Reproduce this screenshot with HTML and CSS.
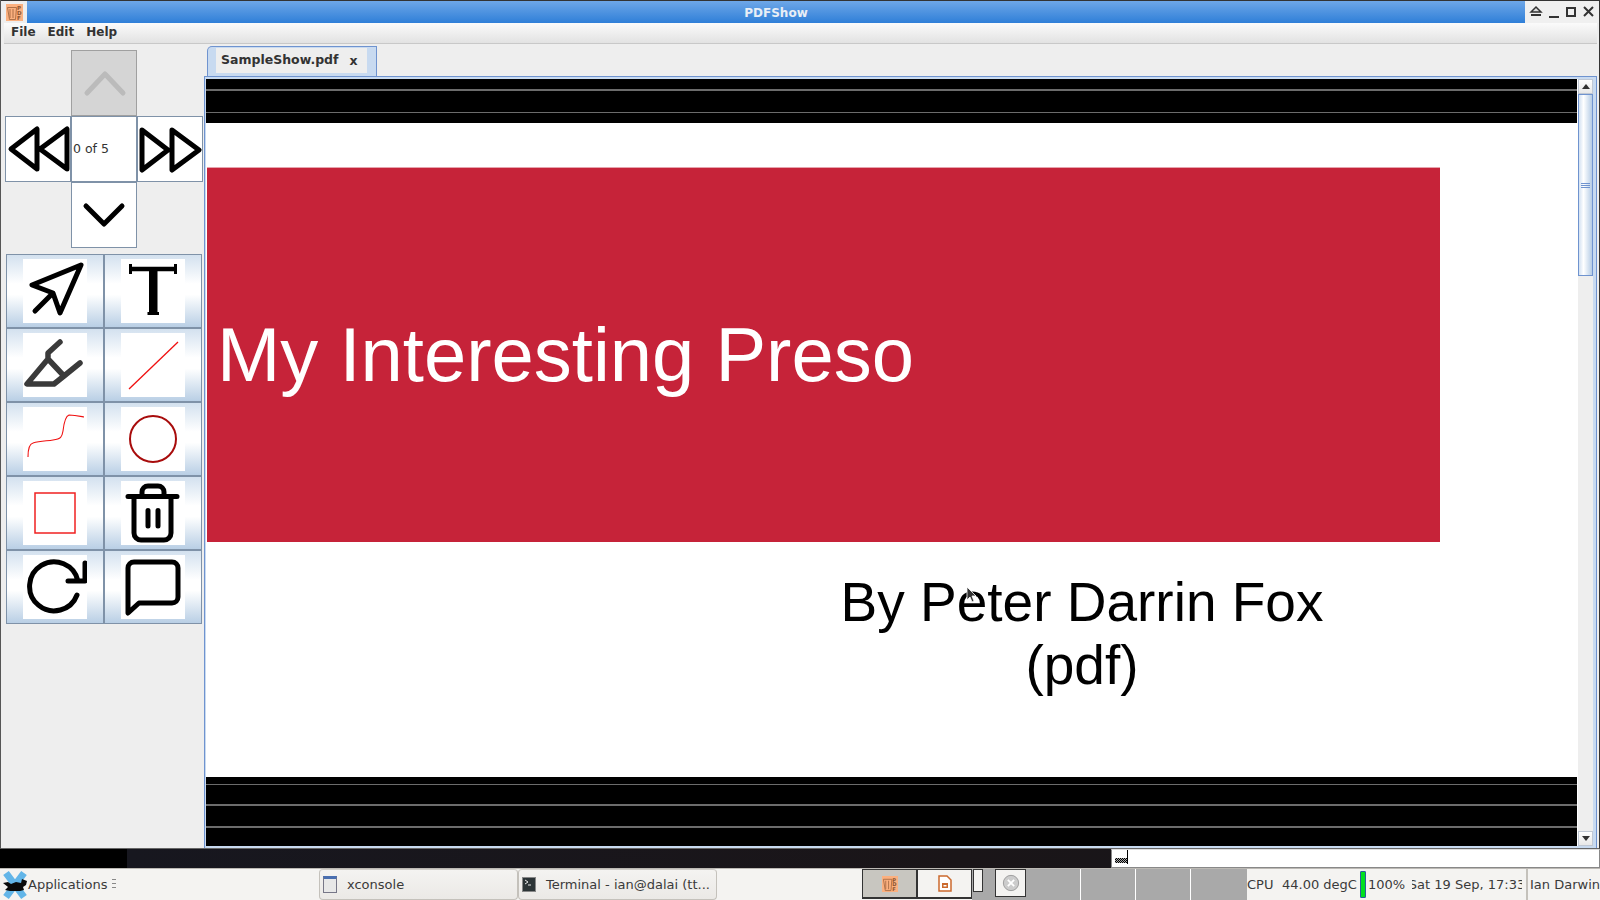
FILE: index.html
```html
<!DOCTYPE html>
<html lang="en">
<head>
<meta charset="utf-8">
<title>PDFShow</title>
<link rel="stylesheet" href="styles.css">
</head>
<body>
<div class="window">
  <header class="titlebar">
    <div class="app-icon">
      <svg width="17" height="17" viewBox="0 0 17 17"><rect width="17" height="17" fill="#fbb07f"/><path d="M1.500 3.500H10.500L9.500 15.500H3.500ZM4 5V14M7 5V14" fill="none" stroke="#a56a42" stroke-width=".9"/><text x="11" y="6" class="mini-pdf">P</text><text x="11" y="11" class="mini-pdf">D</text><text x="11" y="16" class="mini-pdf">F</text></svg>
    </div>
    <div class="title">PDFShow</div>
    <div class="wm-buttons">
      <svg width="16" height="16" viewBox="0 0 16 16"><path d="M3 8l5-5 5 5z" fill="#ddd" stroke="#333" stroke-width="1.500"/><path d="M3 11h10" stroke="#333" stroke-width="2"/></svg>
      <svg width="14" height="16" viewBox="0 0 14 16"><path d="M2 13h10" stroke="#333" stroke-width="2"/></svg>
      <svg width="14" height="16" viewBox="0 0 14 16"><rect x="3" y="4" width="8" height="8" fill="none" stroke="#333" stroke-width="2"/></svg>
      <svg width="14" height="16" viewBox="0 0 14 16"><path d="M3 3l9 9M12 3l-9 9" stroke="#333" stroke-width="2"/></svg>
    </div>
  </header>

  <nav class="menubar">
    <span class="menu-item">File</span>
    <span class="menu-item">Edit</span>
    <span class="menu-item">Help</span>
  </nav>

  <main class="main">
    <aside class="sidebar">
      <div class="nav-pad">
        <button class="nav-btn nav-up">
          <svg width="64" height="64" viewBox="0 0 64 64"><path d="M15 42L33 23L51 42" class="stroke-grey"/></svg>
        </button>
        <button class="nav-btn nav-prev">
          <svg width="64" height="64" viewBox="0 0 64 64"><path d="M5 32L31 12V52ZM34 32L61 12V52Z" class="stroke-black"/></svg>
        </button>
        <div class="nav-btn nav-count">0 of 5</div>
        <button class="nav-btn nav-next">
          <svg width="64" height="64" viewBox="0 0 64 64"><path d="M4 13L30 33L4 53ZM34 13L61 33L34 53Z" class="stroke-black"/></svg>
        </button>
        <button class="nav-btn nav-down">
          <svg width="64" height="64" viewBox="0 0 64 64"><path d="M14 23L32 41L50 23" class="stroke-black"/></svg>
        </button>
      </div>

      <div class="tools">
        <div class="tool"><svg class="tool-icon" viewBox="0 0 64 64"><path d="M58 6L9 26L30 34L37 54ZM28 36L12 52" class="stroke-icon"/></svg></div>
        <div class="tool"><svg class="tool-icon" viewBox="0 0 64 64"><path d="M9.500 5V15M54.500 5V15" fill="none" stroke="#000" stroke-width="3"/><path d="M9 10H55" fill="none" stroke="#000" stroke-width="4.500"/><rect x="28" y="9" width="8.500" height="46" rx="1"/><rect x="26.500" y="53" width="11.500" height="3"/></svg></div>
        <div class="tool"><svg class="tool-icon" viewBox="0 0 64 64"><path d="M37 9L25 20V26L4 51H31L41 43L57 30M25 26L41 43" fill="none" stroke="#3a3a3a" stroke-width="5.500" stroke-linecap="round" stroke-linejoin="round"/></svg></div>
        <div class="tool"><svg class="tool-icon" viewBox="0 0 64 64"><path d="M8 56L57 9" stroke="#f01010" stroke-width="1.300"/></svg></div>
        <div class="tool"><svg class="tool-icon" viewBox="0 0 64 64"><path d="M5 50C5 42 6 37 10 36C17 34 24 34 30 33C38 32 39 30 40 24C41 15 43 9 46 8C52 8 56 9 61 10" fill="none" stroke="#f01010" stroke-width="1.100"/></svg></div>
        <div class="tool"><svg class="tool-icon" viewBox="0 0 64 64"><circle cx="32" cy="32" r="23" fill="none" stroke="#a80c0c" stroke-width="2"/></svg></div>
        <div class="tool"><svg class="tool-icon" viewBox="0 0 64 64"><rect x="12" y="12" width="40" height="40" fill="none" stroke="#f02020" stroke-width="1.500"/></svg></div>
        <div class="tool"><svg class="tool-icon" viewBox="0 0 64 64"><path d="M7 15.500H56M21 15.500V11A6 6 0 0 1 27 5H37A6 6 0 0 1 43 11V15.500M13 17V52A7 7 0 0 0 20 59H43A7 7 0 0 0 50 52V17M27 29.500V45M37 29.500V45" class="stroke-icon"/></svg></div>
        <div class="tool"><svg class="tool-icon" viewBox="0 0 64 64"><path d="M54 40A24.500 24.500 0 1 1 55 26M62 8V26H45" class="stroke-icon"/></svg></div>
        <div class="tool"><svg class="tool-icon" viewBox="0 0 64 64"><path d="M7 58V13A6 6 0 0 1 13 7H51A6 6 0 0 1 57 13V42A6 6 0 0 1 51 48H18Z" class="stroke-icon"/></svg></div>
      </div>
    </aside>

    <section class="docs">
      <div class="tabs">
        <div class="tab"><div class="tab-inner"><span class="tab-name">SampleShow.pdf</span><span class="tab-close">x</span></div></div>
      </div>
      <div class="pane">
        <div class="scroll-view">
          <div class="page">
            <div class="band band-top"><div class="rule rule-a"></div><div class="rule rule-b"></div></div>
            <div class="slide">
              <div class="hero"><h1 class="hero-title">My Interesting Preso</h1></div>
              <p class="author">By Peter Darrin Fox<br>(pdf)</p>
            </div>
            <div class="band band-bottom"><div class="rule rule-c"></div><div class="rule rule-d"></div><div class="rule rule-e"></div></div>
          </div>
          <div class="scrollbar">
            <div class="sb-btn"><span class="arrow-up"></span></div>
            <div class="sb-thumb"><span class="grip"></span></div>
            <div class="sb-track"></div>
            <div class="sb-btn"><span class="arrow-down"></span></div>
          </div>
        </div>
      </div>
    </section>
  </main>

  <svg class="cursor" width="12" height="18" viewBox="0 0 12 18"><path d="M1 1V14L4 11L6 16L8 15L6 10H10Z" fill="#333" stroke="#fff" stroke-width=".8"/></svg>
</div>

<div class="desktop">
  <div class="xconsole"><span class="xc-hatch"></span><span class="xc-caret"></span></div>
</div>

<footer class="panel">
  <div class="apps">
    <svg width="26" height="30" viewBox="0 0 26 30"><path d="M4 3L22 27M22 3L4 27" stroke="#62b5e8" stroke-width="7"/><path d="M1 13L6 12L9 14L14 12L19 13L20 9L25 11L24 15L21 17L22 20L18 21H8L3 20L6 17Z" fill="#0a0a0a"/></svg>
    <span class="apps-label">Applications</span>
    <span class="apps-handle"></span>
  </div>
  <div class="win-btn win-a"><span class="win-icon"></span><span>xconsole</span></div>
  <div class="win-btn win-b">
    <svg width="14" height="15" viewBox="0 0 14 15"><rect x=".5" y=".5" width="13" height="14" fill="#2c3436" stroke="#888"/><path d="M3 3L6 5L3 7M6 8H9" fill="none" stroke="#e8e8e8"/></svg>
    <span>Terminal - ian@dalai (tt...</span>
  </div>
  <div class="launch launch-on">
    <svg width="16" height="18" viewBox="0 0 17 17"><rect width="17" height="17" fill="#fbb07f"/><path d="M1.500 3.500H10.500L9.500 15.500H3.500ZM4 5V14M7 5V14" fill="none" stroke="#a56a42" stroke-width=".9"/><text x="11" y="6" class="mini-pdf">P</text><text x="11" y="11" class="mini-pdf">D</text><text x="11" y="16" class="mini-pdf">F</text></svg>
  </div>
  <div class="launch launch-off">
    <svg width="14" height="17" viewBox="0 0 14 17"><path d="M1 1H9L13 5V16H1Z" fill="#fff" stroke="#cb6a2e" stroke-width="1.500"/><rect x="4" y="8" width="6" height="5" fill="#cb6a2e"/><rect x="5.500" y="10" width="3" height="1.500" fill="#fff"/></svg>
  </div>
  <div class="pager">
    <div class="pager-small"></div>
    <div class="pager-close">
      <svg width="18" height="18" viewBox="0 0 20 20"><circle cx="10" cy="10" r="8.500" fill="#ccc" stroke="#999"/><path d="M6.500 6.500L13.500 13.500M13.500 6.500L6.500 13.500" stroke="#fff" stroke-width="2"/></svg>
    </div>
    <div class="desk"></div><div class="desk"></div><div class="desk"></div><div class="desk desk-last"></div>
  </div>
  <div class="status cpu">CPU</div>
  <div class="status temp">44.00 degC</div>
  <div class="battery"></div>
  <div class="status pct">100%</div>
  <div class="status clock"><span class="clock-text">Sat 19 Sep, 17:33</span></div>
  <div class="user"><span>Ian Darwin</span></div>
</footer>
</body>
</html>
```
FILE: styles.css
```css
* { box-sizing: border-box; }
html, body { margin: 0; padding: 0; height: 100%; }
body {
  width: 1600px;
  height: 900px;
  overflow: hidden;
  display: flex;
  flex-direction: column;
  background: #000;
  font-family: "DejaVu Sans", sans-serif;
}
svg { display: block; }
.mini-pdf {
  font-family: "DejaVu Sans", sans-serif;
  font-size: 5.5px;
  font-weight: 700;
  fill: #8a5530;
}

.window {
  position: relative;
  height: 849px;
  flex: none;
  display: flex;
  flex-direction: column;
  background: #eeeeee;
  border-left: 1px solid #555;
  border-right: 1px solid #333;
  border-bottom: 1px solid #666;
}

.titlebar {
  height: 23px;
  flex: none;
  display: flex;
  background: #eeeeee;
  border-top: 1px solid #333;
}
.app-icon { width: 26px; padding: 3px 0 0 5px; flex: none; }
.title {
  flex: 1;
  background: linear-gradient(#6ea7e8, #2f7fd8);
  color: #e8eef6;
  font-weight: 700;
  font-size: 12px;
  line-height: 24px;
  text-align: center;
}
.wm-buttons {
  width: 74px;
  flex: none;
  display: flex;
  gap: 3px;
  padding: 3px 0 0 3px;
  background: #f0f0f0;
}

.menubar {
  height: 21px;
  flex: none;
  margin: 0 2px 0 3px;
  display: flex;
  gap: 12px;
  padding: 0 0 2px 7px;
  align-items: center;
  background: linear-gradient(#fbfbfb, #e2e2e2);
  border-bottom: 1px solid #c8c8c8;
  color: #333;
  font-weight: 700;
  font-size: 12px;
}

.main { flex: 1; min-height: 0; display: flex; padding-left: 3px; }

.sidebar { width: 200px; flex: none; padding: 6px 0 0 1px; }
.nav-pad {
  display: grid;
  grid-template-columns: repeat(3, 66px);
  grid-template-rows: repeat(3, 66px);
}
.nav-btn {
  padding: 0;
  margin: 0;
  background: #fff;
  border: 1px solid #7f92a8;
  display: flex;
  align-items: center;
  justify-content: center;
}
.nav-up { grid-column: 2; grid-row: 1; background: #d5d5d5; border-color: #a0a0a0; }
.nav-prev { grid-column: 1; grid-row: 2; }
.nav-count {
  grid-column: 2;
  grid-row: 2;
  justify-content: flex-start;
  font-size: 12.5px;
  color: #333;
  padding: 0 0 2px 1px;
}
.nav-next { grid-column: 3; grid-row: 2; }
.nav-down { grid-column: 2; grid-row: 3; }
.stroke-black, .stroke-grey, .stroke-icon {
  fill: none;
  stroke-width: 5;
  stroke-linecap: round;
  stroke-linejoin: round;
}
.stroke-black, .stroke-icon { stroke: #000; }
.stroke-grey { stroke: #bbbbbb; }

.tools {
  margin: 6px 0 0 1px;
  width: 196px;
  display: grid;
  grid-template-columns: 98px 98px;
  grid-auto-rows: 74px;
}
.tool {
  display: flex;
  align-items: center;
  justify-content: center;
  background: linear-gradient(#d3e1ef, #ffffff 40%, #ffffff 55%, #b9cfe5);
  border: 1px solid #7f92a8;
}
.tool-icon { width: 64px; height: 64px; background: #fff; }

.docs { flex: 1; min-width: 0; display: flex; flex-direction: column; }
.tabs { height: 32px; flex: none; padding: 2px 0 0 3px; }
.tab {
  width: 170px;
  height: 30px;
  background: #c8daf0;
  border: 1px solid #6f93cf;
  border-bottom: 0;
  border-top-left-radius: 5px;
  padding: 1px 9px 0 8px;
}
.tab-inner {
  height: 25px;
  background: #eeeeee;
  padding: 0 0 3px 5px;
  display: flex;
  align-items: center;
  gap: 11px;
  color: #333;
  font-weight: 700;
  font-size: 12.5px;
}
.tab-close { font-weight: 700; padding-top: 3px; }

.pane {
  flex: 1;
  min-height: 0;
  margin-right: 2px;
  border-top: 1px solid #6f93cf;
  border-left: 1px solid #6f93cf;
  border-right: 1px solid #6f93cf;
  background: #c8daf0;
  padding: 2px 3px 3px 1px;
}
.scroll-view { height: 767px; display: flex; background: #fff; }

.page { width: 1371px; flex: none; display: flex; flex-direction: column; }
.band { background: #000; flex: none; overflow: hidden; }
.band-top { height: 44px; }
.band-bottom { height: 69px; }
.rule { height: 2px; background: #6c6c6c; }
.rule-a { margin-top: 10px; }
.rule-b { margin-top: 21px; height: 1px; }
.rule-c { margin-top: 7px; height: 1px; }
.rule-d { margin-top: 19px; }
.rule-e { margin-top: 20px; }

.slide { height: 654px; flex: none; padding: 45px 0 0 1px; }
.hero {
  width: 1233px;
  height: 374px;
  background: #c62339;
  display: flex;
  align-items: center;
  padding-left: 10px;
  box-shadow: 0 -1px 0 #e6a3ad;
}
.hero-title {
  margin: 0;
  color: #fff;
  font-family: "Liberation Sans", sans-serif;
  font-weight: 400;
  font-size: 76px;
  line-height: 1;
}
.author {
  width: 600px;
  margin: 29px 0 0 575px;
  color: #000;
  font-family: "Liberation Sans", sans-serif;
  font-size: 55px;
  line-height: 63px;
  text-align: center;
}

.scrollbar {
  width: 16px;
  flex: none;
  display: flex;
  flex-direction: column;
  background: #eeeeee;
  border-left: 1px solid #fff;
}
.sb-btn {
  height: 15px;
  flex: none;
  background: linear-gradient(#fff, #e8e8e8);
  border: 1px solid #c0c8d4;
  display: flex;
  align-items: center;
  justify-content: center;
}
.arrow-up, .arrow-down { width: 0; height: 0; border: 4px solid transparent; }
.arrow-up { border-bottom: 5px solid #333; border-top: 0; }
.arrow-down { border-top: 5px solid #333; border-bottom: 0; }
.sb-thumb {
  height: 182px;
  flex: none;
  border: 1px solid #6f93cf;
  background: linear-gradient(90deg, #d3e1f2, #fff 35%, #b5cce6);
  display: flex;
  align-items: center;
  justify-content: center;
}
.grip {
  width: 9px;
  height: 5px;
  border-top: 1px solid #6f93cf;
  border-bottom: 1px solid #6f93cf;
  background: linear-gradient(transparent 1px, #6f93cf 1px, #6f93cf 2px, transparent 2px);
}
.sb-track { flex: 1; }

.cursor { position: absolute; left: 965px; top: 586px; }

.desktop {
  height: 19px;
  flex: none;
  display: flex;
  justify-content: flex-end;
  background: linear-gradient(90deg, #000 127px, #17171f 127px, #1a1518 60%, #15151a);
}
.xconsole {
  width: 489px;
  background: #fff;
  border: 1px solid #888;
  border-top-color: #ddd;
  display: flex;
  align-items: flex-end;
  padding: 0 0 3px 3px;
}
.xc-hatch {
  width: 12px;
  height: 5px;
  margin-bottom: 1px;
  background: repeating-conic-gradient(#000 0 25%, #aaa 0 50%) 0 0 / 2px 2px;
}
.xc-caret { width: 1px; height: 14px; background: #000; }

.panel {
  height: 32px;
  flex: none;
  display: flex;
  align-items: stretch;
  background: #f4f3f1;
  border-top: 1px solid #bcb9b4;
  color: #3a3a3a;
  font-size: 13px;
  line-height: 31px;
  overflow: hidden;
}
.apps { width: 319px; flex: none; display: flex; align-items: center; padding-left: 2px; }
.apps-handle {
  width: 4px;
  height: 11px;
  margin-left: 5px;
  background: repeating-linear-gradient(#888 0 1px, transparent 1px 4px);
}
.win-btn {
  width: 199px;
  flex: none;
  display: flex;
  align-items: center;
  gap: 10px;
  padding-left: 3px;
  white-space: nowrap;
  overflow: hidden;
  background: linear-gradient(#f4f3f1, #ebe9e6);
  border: 1px solid #c4c1bb;
  border-radius: 4px;
  border-top-color: #d0cdc8;
}
.win-b { margin-right: 145px; }
.win-icon {
  width: 14px;
  height: 17px;
  background: #e8e8e8;
  border: 1px solid #778;
  border-top: 3px solid #4a6fb0;
}
.launch {
  width: 55px;
  flex: none;
  display: flex;
  align-items: center;
  justify-content: center;
  border: 1px solid #333;
  border-bottom-width: 2px;
  margin-bottom: 1px;
}
.launch-on { background: #c8c6c0; }
.launch-off { background: #f4f3f1; }
.pager {
  width: 275px;
  flex: none;
  display: flex;
  align-items: flex-start;
  background: #a9a9a9;
}
.pager-small {
  width: 10px;
  height: 23px;
  margin-left: 1px;
  background: #f4f3f1;
  border: 1px solid #333;
}
.pager-close {
  width: 31px;
  height: 28px;
  margin-left: 12px;
  background: #f4f3f1;
  border: 1px solid #333;
  display: flex;
  align-items: center;
  justify-content: center;
}
.desk { width: 55px; height: 100%; border-right: 1px solid #fff; }
.desk-last { border-right: 0; width: 56px; }
.status { flex: none; white-space: nowrap; }
.cpu { width: 35px; }
.temp { width: 78px; }
.battery {
  width: 6px;
  height: 27px;
  margin: 2px 2px 0 0;
  flex: none;
  background: #00e020;
  border: 1px solid #2a5d9c;
  border-radius: 1px;
}
.pct { width: 44px; }
.clock {
  width: 110px;
  display: flex;
  justify-content: center;
  overflow: hidden;
}
.clock-text { flex: none; }
.user {
  flex: 1;
  min-width: 0;
  margin-left: 4px;
  overflow: hidden;
  white-space: nowrap;
  border-left: 2px solid #c4c1bb;
  padding-left: 2px;
}
```
